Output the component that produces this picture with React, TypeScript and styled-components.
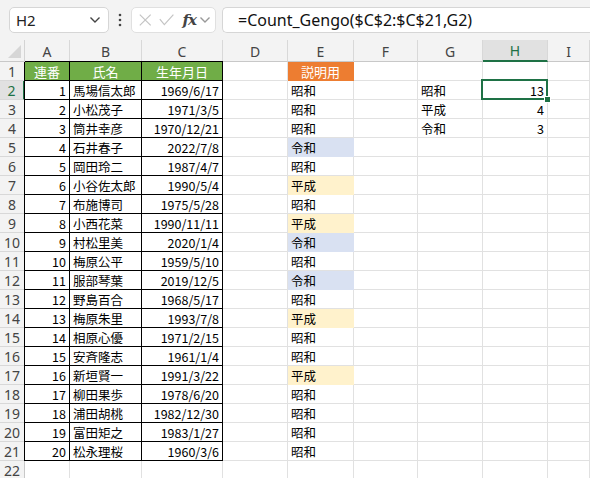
import React from "react";
import styled, { createGlobalStyle, css } from "styled-components";

const Global = createGlobalStyle`
  html, body { margin: 0; padding: 0; background: #ffffff; }
  body { font-family: "Noto Sans CJK JP", "Noto Sans", sans-serif; }
  * { box-sizing: border-box; }
`;

const GREEN = "#1e7145";

const Page = styled.div`
  width: 590px;
  height: 478px;
  overflow: hidden;
  display: flex;
  flex-direction: column;
  background: #ffffff;
`;

const TopBar = styled.div`
  height: 40px;
  flex: none;
  background: #f3f3f3;
  display: flex;
  align-items: center;
  padding: 0 0 0 9px;
`;

const NameBox = styled.div`
  width: 100px;
  height: 26px;
  background: #fff;
  border: 1px solid #d6d6d6;
  border-radius: 5px;
  display: flex;
  align-items: center;
  justify-content: space-between;
  padding: 0 7px 0 6px;
  font-family: "Noto Sans", "Open Sans", sans-serif;
  font-size: 15px;
  color: #222;
`;

const Dots = styled.div`
  width: 22px;
  display: flex;
  justify-content: center;
`;

const FuncBox = styled.div`
  width: 85px;
  height: 26px;
  background: #fff;
  border: 1px solid #e0e0e0;
  border-radius: 5px;
  display: flex;
  align-items: center;
  padding: 0 4px 0 6px;
`;

const Fx = styled.span`
  font-family: "DejaVu Serif", "Liberation Serif", serif;
  font-style: italic;
  font-weight: bold;
  font-size: 15px;
  color: #444;
  margin-left: 6px;
  letter-spacing: -1px;
`;

const FxChevron = styled.span`
  margin-left: 3px;
  display: flex;
`;

const FormulaBox = styled.div`
  flex: 1;
  height: 26px;
  margin-left: 6px;
  background: #fff;
  border: 1px solid #d6d6d6;
  border-right: none;
  border-radius: 5px 0 0 5px;
  display: flex;
  align-items: center;
  padding-left: 15px;
  font-family: "Noto Sans", "Open Sans", sans-serif;
  font-size: 16px;
  color: #111;
`;

const Sheet = styled.div`
  flex: 1;
  display: grid;
  grid-template-columns: 25px 45px 72px 81px 65px 66px 64px 65px 65px 1fr;
  grid-template-rows: 22px repeat(22, 19px);
  background: #fff;
`;

const Corner = styled.div`
  background: #f3f3f3;
  border-right: 1px solid #d4d4d4;
  border-bottom: 1px solid #c8c8c8;
  display: flex;
  align-items: flex-end;
  justify-content: flex-end;
  padding: 0 3px 3px 0;
`;

const ColHead = styled.div<{ $sel?: boolean }>`
  background: ${(p) => (p.$sel ? "#e1e1e1" : "#f3f3f3")};
  border-right: 1px solid #d8d8d8;
  border-bottom: ${(p) => (p.$sel ? `2px solid ${GREEN}` : "1px solid #c8c8c8")};
  display: flex;
  align-items: center;
  justify-content: center;
  font-family: "Noto Sans", "Open Sans", sans-serif;
  font-size: 14px;
  color: ${(p) => (p.$sel ? GREEN : "#444")};
  padding-top: 1px;
`;

const RowHead = styled.div<{ $sel?: boolean }>`
  background: ${(p) => (p.$sel ? "#e1e1e1" : "#f3f3f3")};
  border-right: ${(p) => (p.$sel ? `2px solid ${GREEN}` : "1px solid #c8c8c8")};
  border-bottom: 1px solid #d8d8d8;
  display: flex;
  align-items: center;
  justify-content: center;
  font-family: "Noto Sans", "Open Sans", sans-serif;
  font-size: 14px;
  color: ${(p) => (p.$sel ? GREEN : "#444")};
`;

type Fill = "green" | "orange" | "blue" | "yellow" | undefined;
const fills: Record<string, string> = {
  green: "#70ad47",
  orange: "#ed7d31",
  blue: "#d9e1f2",
  yellow: "#fff2cc",
};

const Cell = styled.div<{
  $align?: "left" | "right" | "center";
  $fill?: Fill;
  $table?: boolean;
  $first?: boolean;
  $top?: boolean;
}>`
  position: relative;
  border-right: 1px solid #e1e1e1;
  border-bottom: 1px solid #e1e1e1;
  display: flex;
  align-items: center;
  padding: 1px 3px 0 3px;
  font-size: 12.5px;
  color: #000;
  white-space: nowrap;
  justify-content: ${(p) =>
    p.$align === "right" ? "flex-end" : p.$align === "center" ? "center" : "flex-start"};
  ${(p) =>
    p.$fill &&
    css`
      background: ${fills[p.$fill]};
      border-color: ${fills[p.$fill]};
    `}
  ${(p) =>
    (p.$fill === "green" || p.$fill === "orange") &&
    css`
      color: #fff;
      font-size: 13px;
    `}
  ${(p) =>
    p.$table &&
    css`
      border-color: #000;
    `}
  ${(p) => {
    const s: string[] = [];
    if (p.$first) s.push("-1px 0 0 #000");
    if (p.$top) s.push("0 -1px 0 #000");
    return s.length ? css`box-shadow: ${s.join(", ")};` : "";
  }}
`;

const Selection = styled.div`
  position: absolute;
  z-index: 5;
  top: -2px;
  left: -2px;
  right: -1px;
  bottom: -1px;
  border: 2px solid ${GREEN};
  pointer-events: none;
`;

const Handle = styled.div`
  position: absolute;
  right: -5px;
  bottom: -5px;
  width: 7px;
  height: 7px;
  background: ${GREEN};
  border: 1px solid #fff;
`;

const cols = ["A", "B", "C", "D", "E", "F", "G", "H", "I"];

const data: [number, string, string, string][] = [
  [1, "馬場信太郎", "1969/6/17", "昭和"],
  [2, "小松茂子", "1971/3/5", "昭和"],
  [3, "筒井幸彦", "1970/12/21", "昭和"],
  [4, "石井春子", "2022/7/8", "令和"],
  [5, "岡田玲二", "1987/4/7", "昭和"],
  [6, "小谷佐太郎", "1990/5/4", "平成"],
  [7, "布施博司", "1975/5/28", "昭和"],
  [8, "小西花菜", "1990/11/11", "平成"],
  [9, "村松里美", "2020/1/4", "令和"],
  [10, "梅原公平", "1959/5/10", "昭和"],
  [11, "服部琴葉", "2019/12/5", "令和"],
  [12, "野島百合", "1968/5/17", "昭和"],
  [13, "梅原朱里", "1993/7/8", "平成"],
  [14, "相原心優", "1971/2/15", "昭和"],
  [15, "安斉隆志", "1961/1/4", "昭和"],
  [16, "新垣賢一", "1991/3/22", "平成"],
  [17, "柳田果歩", "1978/6/20", "昭和"],
  [18, "浦田胡桃", "1982/12/30", "昭和"],
  [19, "富田矩之", "1983/1/27", "昭和"],
  [20, "松永理桜", "1960/3/6", "昭和"],
];

const summary: [string, number][] = [
  ["昭和", 13],
  ["平成", 4],
  ["令和", 3],
];

const eraFill = (e: string): Fill => (e === "令和" ? "blue" : e === "平成" ? "yellow" : undefined);

const Chevron = ({ color = "#555" }: { color?: string }) => (
  <svg width="12" height="8" viewBox="0 0 12 8">
    <path d="M1.5 1.5 L6 6 L10.5 1.5" fill="none" stroke={color} strokeWidth="1.4" />
  </svg>
);

export default function App() {
  const rows: React.ReactNode[] = [];

  rows.push(
    <RowHead key="rh1">1</RowHead>,
    <Cell key="a1" $fill="green" $table $first $top $align="center">連番</Cell>,
    <Cell key="b1" $fill="green" $table $top $align="center">氏名</Cell>,
    <Cell key="c1" $fill="green" $table $top $align="center">生年月日</Cell>,
    <Cell key="d1" />,
    <Cell key="e1" $fill="orange" $align="center">説明用</Cell>,
    <Cell key="f1" />,
    <Cell key="g1" />,
    <Cell key="h1" />,
    <Cell key="i1" />
  );

  data.forEach(([n, name, date, era], i) => {
    const r = i + 2;
    const s = summary[i];
    rows.push(
      <RowHead key={`rh${r}`} $sel={r === 2}>{r}</RowHead>,
      <Cell key={`a${r}`} $table $first $align="right">{n}</Cell>,
      <Cell key={`b${r}`} $table>{name}</Cell>,
      <Cell key={`c${r}`} $table $align="right">{date}</Cell>,
      <Cell key={`d${r}`} />,
      <Cell key={`e${r}`} $fill={eraFill(era)}>{era}</Cell>,
      <Cell key={`f${r}`} />,
      <Cell key={`g${r}`}>{s ? s[0] : ""}</Cell>,
      <Cell key={`h${r}`} $align="right">
        {s ? s[1] : ""}
        {r === 2 && (
          <Selection>
            <Handle />
          </Selection>
        )}
      </Cell>,
      <Cell key={`i${r}`} />
    );
  });

  rows.push(<RowHead key="rh22">22</RowHead>);
  for (let c = 0; c < 9; c++) rows.push(<Cell key={`x22${c}`} />);

  return (
    <>
      <Global />
      <Page>
        <TopBar>
          <NameBox>
            <span>H2</span>
            <Chevron color="#444" />
          </NameBox>
          <Dots>
            <svg width="4" height="16" viewBox="0 0 4 16">
              <circle cx="2" cy="3" r="1.3" fill="#444" />
              <circle cx="2" cy="8" r="1.3" fill="#444" />
              <circle cx="2" cy="13" r="1.3" fill="#444" />
            </svg>
          </Dots>
          <FuncBox>
            <svg width="16" height="16" viewBox="0 0 16 16">
              <path d="M2 2 L14 14 M14 2 L2 14" stroke="#c4c4c4" strokeWidth="1.3" fill="none" />
            </svg>
            <svg width="20" height="16" viewBox="0 0 20 16" style={{ marginLeft: 6 }}>
              <path d="M2 7 L7 13 L17 2" stroke="#c4c4c4" strokeWidth="1.3" fill="none" />
            </svg>
            <Fx>fx</Fx>
            <FxChevron>
              <Chevron color="#999" />
            </FxChevron>
          </FuncBox>
          <FormulaBox>=Count_Gengo($C$2:$C$21,G2)</FormulaBox>
        </TopBar>
        <Sheet>
          <Corner>
            <svg width="13" height="13" viewBox="0 0 13 13">
              <path d="M13 0 L13 13 L0 13 Z" fill="#d6d6d6" />
            </svg>
          </Corner>
          {cols.map((c) => (
            <ColHead key={c} $sel={c === "H"}>{c}</ColHead>
          ))}
          {rows}
        </Sheet>
      </Page>
    </>
  );
}
